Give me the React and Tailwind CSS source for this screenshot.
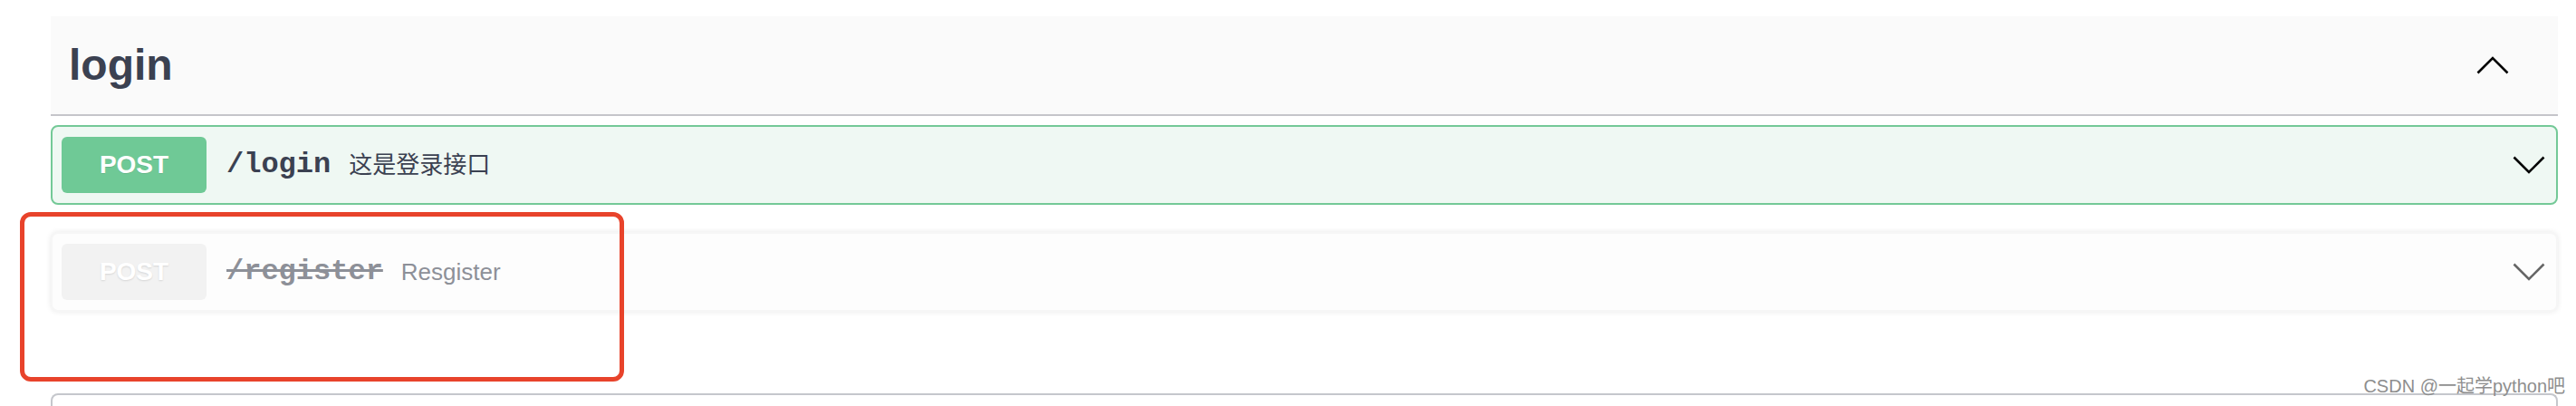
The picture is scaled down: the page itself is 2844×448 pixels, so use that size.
const ChevronUp = ({ color = "#000" }) => (
  <svg width="36" height="20" viewBox="0 0 36 20" fill="none">
    <polyline points="1.5,18.5 18,2 34.5,18.5" stroke={color} strokeWidth="2.6" />
  </svg>
);

const ChevronDown = ({ color = "#000" }) => (
  <svg width="36" height="20" viewBox="0 0 36 20" fill="none">
    <polyline points="1.5,1.5 18,18 34.5,1.5" stroke={color} strokeWidth="2.6" />
  </svg>
);

const App = () => {
  return (
    <div className="relative w-full h-[448px] overflow-hidden bg-white">
      <div className="pl-[56px] pr-[20px] pt-[18px]">
        {/* TAG HEADER */}
        <div className="h-[110px] bg-[#fafafa] border-b-2 border-[#c5c5ca] flex items-center justify-between pl-[20px] pr-[54px]">
          <h3 className="text-[48px] font-bold text-[#3b4151] font-['Liberation_Sans',sans-serif] leading-none">
            login
          </h3>
          <ChevronUp />
        </div>

        {/* POST /login */}
        <div className="mt-[10px] h-[88px] flex items-center bg-[#eff8f3] border-2 border-[#74c997] rounded-[8px] pl-[10px] pr-[12px]">
          <span className="w-[160px] h-[62px] flex items-center justify-center rounded-[6px] bg-[#6fc996] text-white text-[28px] font-bold font-['Liberation_Sans',sans-serif] [text-shadow:0_1px_0_rgba(0,0,0,0.1)]">
            POST
          </span>
          <span className="pl-[22px] pr-[20px] text-[32px] font-bold text-[#3b4151] font-['Liberation_Mono',monospace]">
            /login
          </span>
          <span className="text-[26px] text-[#3b4151] font-['Liberation_Sans','Noto_Sans_CJK_SC',sans-serif]">
            这是登录接口
          </span>
          <div className="ml-auto flex items-center">
            <ChevronDown />
          </div>
        </div>

        {/* POST /register (deprecated) */}
        <div className="mt-[30px] h-[88px] flex items-center bg-[#fdfdfd] border-2 border-[#f6f6f6] rounded-[8px] shadow-[0_0_6px_rgba(0,0,0,0.09)] pl-[10px] pr-[12px]">
          <span className="w-[160px] h-[62px] flex items-center justify-center rounded-[6px] bg-[#f2f2f2] text-white text-[28px] font-bold font-['Liberation_Sans',sans-serif] [text-shadow:0_1px_2px_rgba(0,0,0,0.12)]">
            POST
          </span>
          <span className="pl-[22px] pr-[20px] text-[32px] font-bold text-[#8d9098] line-through font-['Liberation_Mono',monospace]">
            /register
          </span>
          <span className="text-[26px] text-[#8d9098] font-['Liberation_Sans',sans-serif]">
            Resgister
          </span>
          <div className="ml-auto flex items-center">
            <ChevronDown color="#666" />
          </div>
        </div>

        {/* next section */}
        <div className="mt-[90px] h-[40px] border-2 border-b-0 border-[#c5c7cc] rounded-t-[8px]" />
      </div>

      {/* red annotation box */}
      <div className="absolute left-[22px] top-[234px] w-[667px] h-[187px] border-[5px] border-[#e8432b] rounded-[12px]" />

      {/* watermark */}
      <div className="absolute right-[12px] top-[416px] text-[20px] leading-none text-[#8e8e8e] font-['Liberation_Sans','Noto_Sans_CJK_SC',sans-serif]">
        CSDN @一起学python吧
      </div>
    </div>
  );
};

export default App;
